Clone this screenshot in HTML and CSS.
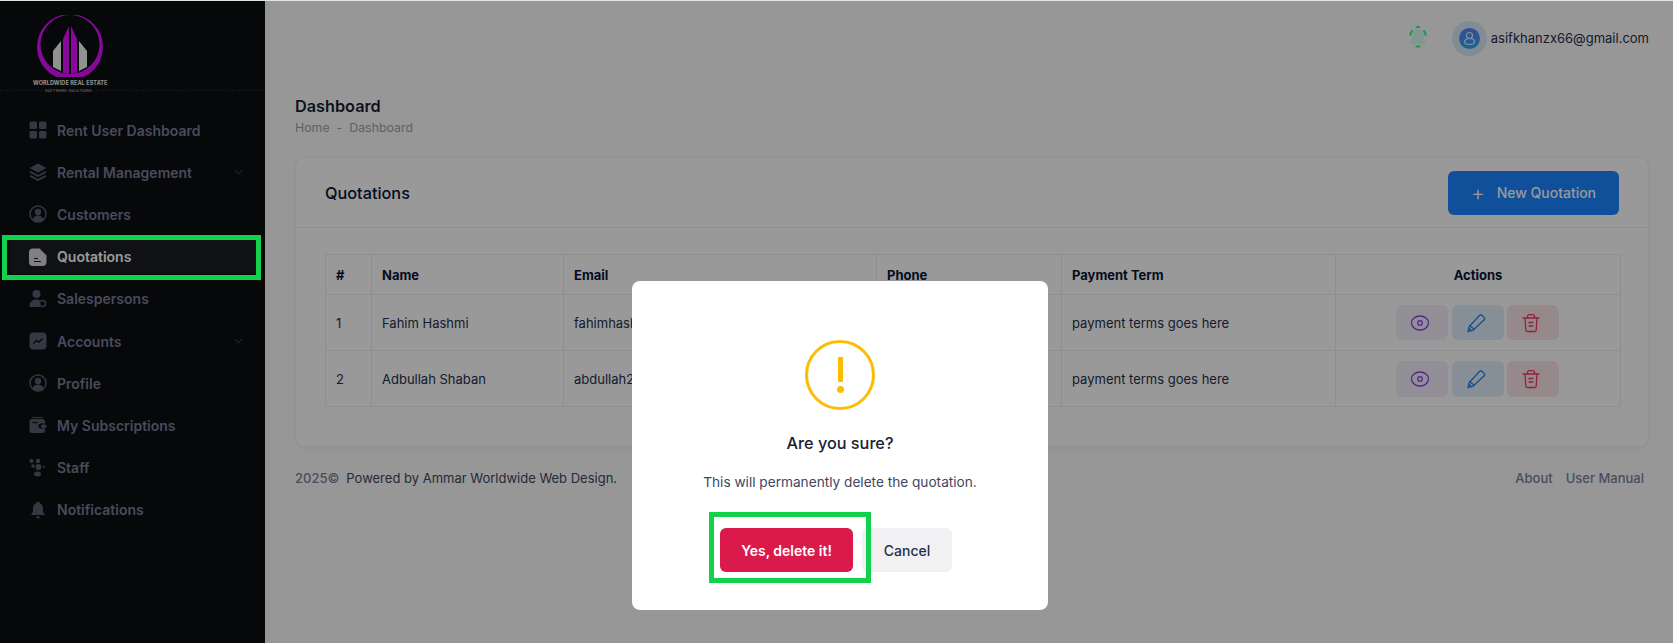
FILE: index.html
```html
<!DOCTYPE html>
<html lang="en">
<head>
<meta charset="utf-8">
<title>Quotations</title>
<link rel="stylesheet" href="styles.css">
</head>
<body>
<div class="app">
  <aside class="sidebar">
    <div class="brand">
      <svg class="brand-mark" viewBox="0 0 70 62" width="70" height="62">
        <path class="mark-purple" fill-rule="evenodd" d="M35 0a33 33 0 1 1 0 66a33 33 0 1 1 0-66zM35 1a29.500 29.500 0 1 0 0 59a29.500 29.500 0 1 0 0-59z" transform="translate(0 -1)"/>
        <path class="mark-purple" d="M28 24L34 11V59L28 58zM36 11L42 24V58L36 59z"/>
        <path class="mark-grey" d="M18 36L26 26V56L18 52zM44 26L52 36V52L44 56z"/>
      </svg>
      <div class="brand-name">WORLDWIDE REAL ESTATE</div>
      <div class="brand-sub">SOFTWARE SOLUTIONS</div>
    </div>
    <nav class="menu">
      <a class="item">
        <svg class="ico" viewBox="0 0 18 18"><rect x="0.500" y="0.500" width="7.500" height="7.500" rx="1.500"/><rect x="10" y="0.500" width="7.500" height="7.500" rx="1.500"/><rect x="0.500" y="10" width="7.500" height="7.500" rx="1.500"/><rect x="10" y="10" width="7.500" height="7.500" rx="1.500"/></svg>
        <span class="label">Rent User Dashboard</span>
      </a>
      <a class="item">
        <svg class="ico" viewBox="0 0 18 18"><path d="M9 0.500L17.500 5L9 9.500L0.500 5z"/><path d="M1.500 8L9 12L16.500 8L17.500 9.500L9 14L0.500 9.500z"/><path d="M1.500 12L9 16L16.500 12L17.500 13.500L9 18L0.500 13.500z"/></svg>
        <span class="label">Rental Management</span>
        <svg class="chev" viewBox="0 0 10 6"><path d="M1 1l4 4l4-4"/></svg>
      </a>
      <a class="item">
        <svg class="ico" viewBox="0 0 18 18"><circle class="ring" cx="9" cy="9" r="8"/><circle cx="9" cy="7" r="3.200"/><path d="M3.500 14.500c1-3 3-4 5.500-4s4.500 1 5.500 4c-1.500 1.700-3.400 2.500-5.500 2.500s-4-.8-5.500-2.500z"/></svg>
        <span class="label">Customers</span>
      </a>
      <a class="item active">
        <svg class="ico" viewBox="0 0 18 18"><path class="doc" d="M4 0.500H11L17.500 7V14a4 4 0 0 1-4 4H4a4 4 0 0 1-4-4V4.500a4 4 0 0 1 4-4z"/><path class="fold" d="M10.500 0.500L17.500 7.500" /><path class="doc-line" d="M5 10.500h4M5 13.500h7"/></svg>
        <span class="label">Quotations</span>
      </a>
      <a class="item">
        <svg class="ico" viewBox="0 0 18 18"><circle cx="7.500" cy="4" r="4"/><path d="M0.500 17c0-5 2.500-7.500 7-7.500c1.500 0 2.500.3 3.300.8c-1.300 1.600-1.300 4.700.4 6.700z"/><circle class="ring" cx="13.500" cy="13.500" r="3"/></svg>
        <span class="label">Salespersons</span>
      </a>
      <a class="item">
        <svg class="ico" viewBox="0 0 18 18"><rect x="0.500" y="0.500" width="17" height="17" rx="4"/><path class="cut" d="M4.500 11.500l3-3l2.500 1.500l3.500-3.500"/></svg>
        <span class="label">Accounts</span>
        <svg class="chev" viewBox="0 0 10 6"><path d="M1 1l4 4l4-4"/></svg>
      </a>
      <a class="item">
        <svg class="ico" viewBox="0 0 18 18"><circle class="ring" cx="9" cy="9" r="8"/><circle cx="9" cy="7" r="3.200"/><path d="M3.500 14.500c1-3 3-4 5.500-4s4.500 1 5.500 4c-1.500 1.700-3.400 2.500-5.500 2.500s-4-.8-5.500-2.500z"/></svg>
        <span class="label">Profile</span>
      </a>
      <a class="item">
        <svg class="ico" viewBox="0 0 18 18"><path d="M3.500 1h9a3 3 0 0 1 2 1H3z"/><path d="M3 3h11a2.500 2.500 0 0 1 2 2v2.500h-4a2.500 2.500 0 0 0 0 5h4V15a2.500 2.500 0 0 1-2.500 2H3a2.500 2.500 0 0 1-2.500-2.500V5.500A2.500 2.500 0 0 1 3 3z"/><rect x="12" y="8.500" width="5.500" height="3.500" rx="1.700"/><path class="cut" d="M3.500 6.500h5"/></svg>
        <span class="label">My Subscriptions</span>
      </a>
      <a class="item">
        <svg class="ico" viewBox="0 0 18 18"><circle cx="2.500" cy="2" r="2"/><circle cx="9" cy="2" r="2.200"/><circle cx="4" cy="7" r="1.800"/><circle cx="9.500" cy="8" r="3"/><path d="M14 6.500l2.500 1.500l-2.500 1.500z"/><ellipse cx="8.500" cy="15" rx="3.500" ry="2.500"/></svg>
        <span class="label">Staff</span>
      </a>
      <a class="item">
        <svg class="ico" viewBox="0 0 18 18"><path d="M9 0.500c1 0 1.600.8 1.700 1.700c2.300.8 3.300 2.800 3.300 5.300v3l2 3.500H2l2-3.500v-3c0-2.500 1-4.500 3.300-5.300c.1-.9.700-1.700 1.700-1.700z"/><path d="M7 15.500h4a2 2 0 0 1-4 0z"/></svg>
        <span class="label">Notifications</span>
      </a>
    </nav>
  </aside>

  <main class="main">
    <header class="topbar">
      <svg class="bell" viewBox="0 0 24 24" width="24" height="24">
        <path class="bell-body" d="M12 3c3.500 0 5.500 2.800 5.500 6.500c0 3.500 1.500 6 2.500 7.500v1H4v-1c1-1.500 2.500-4 2.500-7.500C6.500 5.800 8.500 3 12 3z"/>
        <path class="bell-ring" d="M10.700 1h2.600M4.500 9c0-1.500.5-3 1.500-4.200M19.500 9c0-1.500-.5-3-1.500-4.200M10.500 20.500h3"/>
      </svg>
      <div class="avatar">
        <div class="avatar-core">
          <svg viewBox="0 0 21 21" width="21" height="21"><circle class="avatar-line" cx="10.500" cy="7.500" r="3"/><path class="avatar-line" d="M10.500 10.500c-3 0-5 1.600-5 3.500s2 2.500 5 2.500s5-.6 5-2.500s-2-3.500-5-3.500z"/></svg>
        </div>
      </div>
      <span class="email">asifkhanzx66@gmail.com</span>
    </header>

    <div class="heading">
      <h1 class="page-title">Dashboard</h1>
      <div class="crumbs"><span>Home</span><span class="dash">-</span><span>Dashboard</span></div>
    </div>

    <section class="card">
      <div class="card-head">
        <h2 class="card-title">Quotations</h2>
        <button class="btn-new"><span class="plus">+</span>New Quotation</button>
      </div>
      <div class="card-body">
        <table class="grid">
          <colgroup>
            <col class="c1"><col class="c2"><col class="c3"><col class="c4"><col class="c5"><col class="c6">
          </colgroup>
          <thead>
            <tr><th>#</th><th>Name</th><th>Email</th><th>Phone</th><th>Payment Term</th><th class="center">Actions</th></tr>
          </thead>
          <tbody>
            <tr>
              <td>1</td><td>Fahim Hashmi</td><td>fahimhashmi@gmail.com</td><td>03001234567</td><td>payment terms goes here</td>
              <td>
                <div class="acts">
                  <button class="act view"><svg viewBox="0 0 20 20" width="20" height="20"><ellipse cx="10" cy="10" rx="8.500" ry="7"/><circle cx="10" cy="10" r="2.300"/></svg></button>
                  <button class="act edit"><svg viewBox="0 0 20 20" width="20" height="20"><path d="M2 18.500l1.200-5L13.800 2.300a1.500 1.500 0 0 1 2.100 0l2.300 2.300a1.500 1.500 0 0 1 0 2.100L7 17.300zM2.800 15l2.700 2.700M4 12.500l4 4"/></svg></button>
                  <button class="act del"><svg viewBox="0 0 20 20" width="20" height="20"><path d="M2 5h16M4 5l.8 12a1.500 1.500 0 0 0 1.500 1.500h7.400a1.500 1.500 0 0 0 1.500-1.500L16 5M6.500 5V3.200a1.500 1.500 0 0 1 1.500-1.500h4a1.500 1.500 0 0 1 1.500 1.500V5M8 9.500h4M8 13h4"/></svg></button>
                </div>
              </td>
            </tr>
            <tr>
              <td>2</td><td>Adbullah Shaban</td><td>abdullah2@gmail.com</td><td>03007654321</td><td>payment terms goes here</td>
              <td>
                <div class="acts">
                  <button class="act view"><svg viewBox="0 0 20 20" width="20" height="20"><ellipse cx="10" cy="10" rx="8.500" ry="7"/><circle cx="10" cy="10" r="2.300"/></svg></button>
                  <button class="act edit"><svg viewBox="0 0 20 20" width="20" height="20"><path d="M2 18.500l1.200-5L13.800 2.300a1.500 1.500 0 0 1 2.100 0l2.300 2.300a1.500 1.500 0 0 1 0 2.100L7 17.300zM2.800 15l2.700 2.700M4 12.500l4 4"/></svg></button>
                  <button class="act del"><svg viewBox="0 0 20 20" width="20" height="20"><path d="M2 5h16M4 5l.8 12a1.500 1.500 0 0 0 1.500 1.500h7.400a1.500 1.500 0 0 0 1.500-1.500L16 5M6.500 5V3.200a1.500 1.500 0 0 1 1.500-1.500h4a1.500 1.500 0 0 1 1.500 1.500V5M8 9.500h4M8 13h4"/></svg></button>
                </div>
              </td>
            </tr>
          </tbody>
        </table>
      </div>
    </section>

    <footer class="foot">
      <div><span class="year">2025©</span><span class="powered">Powered by Ammar Worldwide Web Design.</span></div>
      <div class="foot-links"><span>About</span><span>User Manual</span></div>
    </footer>
  </main>
</div>

<div class="overlay">
  <div class="modal">
    <div class="warn"><span class="warn-bar"></span><span class="warn-dot"></span></div>
    <h3 class="modal-title">Are you sure?</h3>
    <p class="modal-text">This will permanently delete the quotation.</p>
    <div class="modal-btns">
      <button class="btn-yes">Yes, delete it!</button>
      <button class="btn-cancel">Cancel</button>
    </div>
  </div>
</div>

<div class="mark mark-side"></div>
<div class="mark mark-yes"></div>
</body>
</html>
```

FILE: styles.css
```css
* { box-sizing: border-box; }
html, body { margin: 0; height: 643px; overflow: hidden; }
body {
  position: relative;
  background: #dfe6e2;
  padding-top: 1px;
  font-family: Inter, "Noto Sans", sans-serif;
  font-size: 13px;
  color: #252f4a;
}
h1, h2, h3, p { margin: 0; }
button { font-family: inherit; border: 0; cursor: pointer; }

.app { display: flex; height: 642px; background: #fcfcfc; }

/* Sidebar */
.sidebar { width: 265px; flex: none; background: #0d0e12; }
.brand {
  height: 90px;
  border-bottom: 1px dashed #26272f;
  padding-top: 14px;
  position: relative;
  overflow: visible;
}
.brand-mark { display: block; margin-left: 35px; }
.mark-purple { fill: #e010ff; }
.mark-grey { fill: #f2f2f2; }
.brand-name {
  position: absolute; left: 33px; top: 79px; width: 74px;
  font-size: 5.500px; font-weight: 700; line-height: 7px; color: #f0f0f0;
  white-space: nowrap; letter-spacing: .1px;
}
.brand-sub {
  position: absolute; left: 45px; top: 88px; width: 52px;
  font-size: 3.500px; line-height: 5px; color: #d0d0d0;
  white-space: nowrap; letter-spacing: .35px;
}
.menu { padding-top: 18px; }
.item {
  display: flex; align-items: center;
  height: 42.200px;
  margin: 0 9px 0 10px;
  padding: 0 13px 0 19px;
  color: #7a7d98;
  font-size: 14px; font-weight: 600;
  border-radius: 6px;
}
.item.active { color: #fff; }
.item.active::before { content: none; }
.active { background: linear-gradient(#1c1d22, #1c1d22) center / 100% 35px no-repeat; }
.ico { width: 18px; height: 18px; flex: none; fill: #5a5c6e; margin-right: 10px; }
.ico .ring { fill: none; stroke: #5a5c6e; stroke-width: 1.500; }
.ico .cut { fill: none; stroke: #0d0e12; stroke-width: 1.400; }
.ico .doc { fill: #d5d5d8; }
.ico .fold { fill: none; stroke: #c04080; stroke-width: 1; }
.ico .doc-line { fill: none; stroke: #1c1d22; stroke-width: 1.200; }
.label { flex: 1; white-space: nowrap; }
.chev { width: 9px; height: 6px; flex: none; fill: none; stroke: #5a5c6e; stroke-width: 1; }

/* Main column */
.main { flex: 1; min-width: 0; padding: 0 24px 0 30px; }
.topbar { height: 74px; display: flex; align-items: center; justify-content: flex-end; }
.bell { margin-right: 22px; }
.bell-body { fill: #d0fff0; }
.bell-ring { fill: none; stroke: #30ff7c; stroke-width: 2; stroke-linecap: round; }
.avatar {
  width: 35px; height: 35px; border-radius: 50%;
  background: #d8eaf6;
  display: flex; align-items: center; justify-content: center;
  margin-right: 4px;
}
.avatar-core {
  width: 21px; height: 21px; border-radius: 50%;
  background: linear-gradient(#5a80ff, #2ba8f5);
}
.avatar-core svg { display: block; }
.avatar-line { fill: none; stroke: #e8f6ff; stroke-width: 1.100; }
.email { font-size: 13px; line-height: 16px; margin-right: 0; }

.heading { padding-top: 21px; }
.page-title { font-size: 16.250px; font-weight: 600; line-height: 20px; color: #181c32; }
.crumbs { display: flex; gap: 6px; margin-top: 4px; font-size: 12.350px; line-height: 16px; color: #99a1b7; }
.dash { margin: 0 1px; }

.card {
  margin-top: 21px;
  background: #fff;
  border: 1px solid #f1f1f4;
  border-radius: 10px;
  box-shadow: 0 3px 4px rgba(0,0,0,.03);
}
.card-head {
  height: 70px;
  display: flex; align-items: center; justify-content: space-between;
  padding: 0 29px;
  border-bottom: 1px solid #f1f1f4;
}
.card-title { font-size: 16.250px; font-weight: 500; color: #071437; }
.btn-new {
  width: 171px; height: 44px;
  background: #1b84ff; color: #fff;
  border-radius: 6px;
  font-size: 13.975px; font-weight: 500;
  display: flex; align-items: center; justify-content: center;
}
.plus { font-size: 21px; font-weight: 300; line-height: 1; margin-right: 12px; }
.card-body { padding: 26px 29px 39px; }

.grid { width: 1295px; table-layout: fixed; border-collapse: collapse; }
.c1 { width: 46px; } .c2 { width: 192px; } .c3 { width: 313px; }
.c4 { width: 185px; } .c5 { width: 274px; } .c6 { width: 285px; }
.grid th, .grid td { border: 1px solid #ededf0; padding: 0 10px; text-align: left; white-space: nowrap; overflow: hidden; }
.grid th { height: 40px; font-weight: 700; font-size: 13px; color: #071437; }
.grid td { height: 56px; font-size: 13px; color: #252f4a; }
.grid th.center { text-align: center; }
.acts { display: flex; justify-content: center; gap: 3.500px; padding-right: 1px; }
.act { width: 52px; height: 35px; border-radius: 6px; display: flex; align-items: center; justify-content: center; padding: 0 4px 0 0; }
.grid tbody tr:last-child .act { height: 36px; }
.act svg { fill: none; stroke-width: 1.300; stroke-linejoin: round; stroke-linecap: round; }
.view { background: #f3eefa; } .view svg { stroke: #8a3ff0; }
.edit { background: #e0eefb; } .edit svg { stroke: #2b80e8; }
.del { background: #fbe4ea; } .del svg { stroke: #f03a68; }

.foot {
  display: flex; justify-content: space-between; align-items: center;
  height: 30px; margin-top: 16px; padding-right: 5px;
  font-size: 13px;
}
.year { color: #78829d; font-weight: 500; }
.powered { color: #3f4760; margin-left: 7px; }
.foot-links { display: flex; gap: 13px; color: #78829d; font-weight: 500; }

/* Modal */
.overlay {
  position: absolute; left: 0; right: 0; top: 1px; bottom: 0;
  background: rgba(0,0,0,.4);
  display: flex; justify-content: center; align-items: flex-start;
  padding: 280px 0 0 7px;
}
.modal {
  width: 416px; height: 329px;
  background: #fff; border-radius: 8px;
  display: flex; flex-direction: column; align-items: center;
  padding-top: 59px;
}
.warn {
  width: 70px; height: 70px; border-radius: 50%;
  border: 3.500px solid #fabd00;
  display: flex; flex-direction: column; align-items: center; padding-top: 14px;
}
.warn-bar { width: 5px; height: 25px; background: #fabd00; border-radius: 1px; }
.warn-dot { width: 7px; height: 7px; margin-top: 4px; background: #fabd00; border-radius: 50%; }
.modal-title { margin-top: 21px; font-size: 16.250px; font-weight: 500; line-height: 24px; color: #1a2033; }
.modal-text { margin-top: 17px; font-size: 13.650px; line-height: 20px; color: #3f4760; white-space: nowrap; }
.modal-btns { display: flex; gap: 9px; margin-top: 36px; margin-left: -8px; }
.btn-yes { width: 133px; height: 44px; border-radius: 6px; background: #d91a4b; color: #fff; font-size: 13.975px; font-weight: 600; }
.btn-cancel { width: 90px; height: 44px; border-radius: 6px; background: #f1f1f4; color: #252f4a; font-size: 13.975px; font-weight: 500; }

/* Highlight frames drawn on top of the screenshot */
.mark { position: absolute; border: 5px solid #12d14b; pointer-events: none; }
.mark-side { left: 2px; top: 235px; width: 259px; height: 45px; }
.mark-yes { left: 709px; top: 512px; width: 162px; height: 71px; }
```
